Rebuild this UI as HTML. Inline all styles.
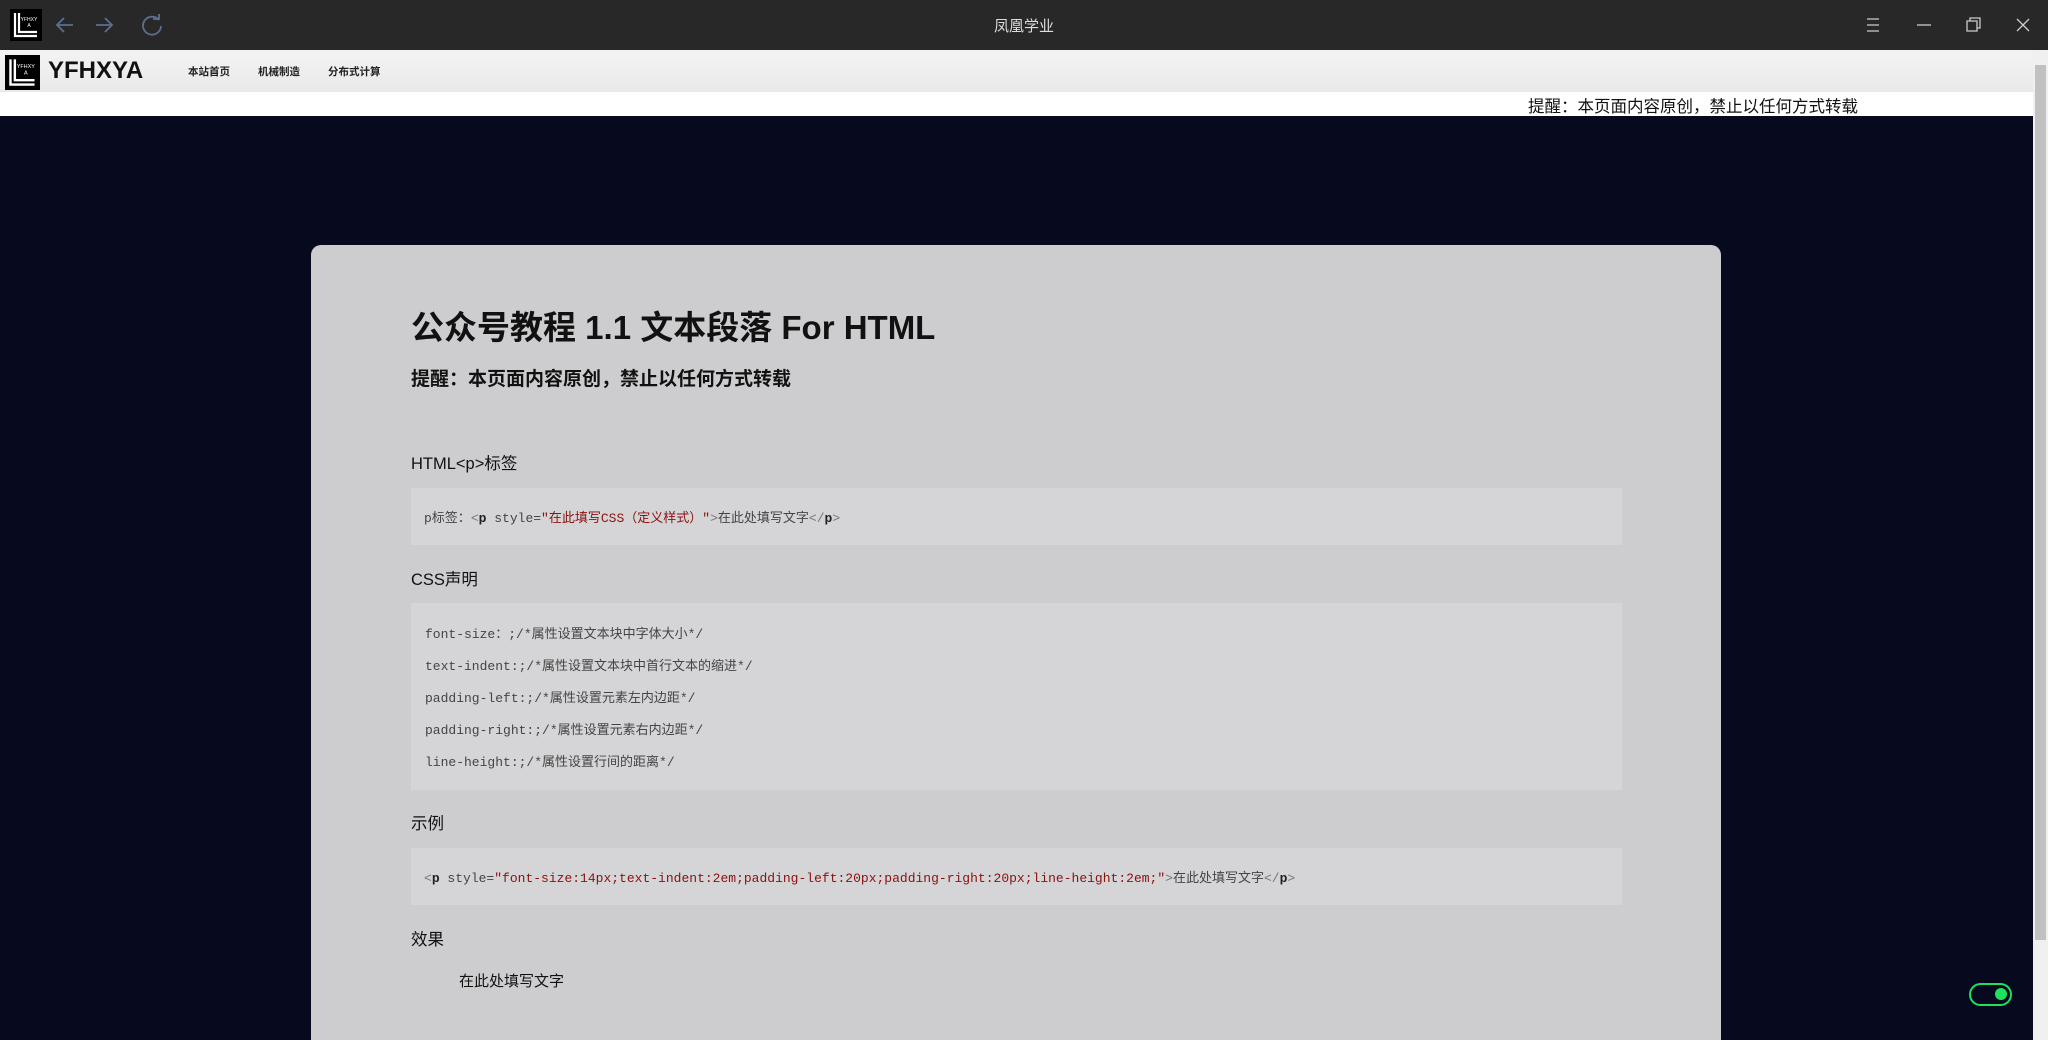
<!DOCTYPE html>
<html><head><meta charset="utf-8"><style>
*{margin:0;padding:0;box-sizing:border-box}
html,body{width:2048px;height:1040px;overflow:hidden}
body{background:#070a1f;font-family:"Liberation Sans","Noto Sans CJK SC",sans-serif;position:relative}
.a{position:absolute;white-space:nowrap}
.tb{left:0;top:0;width:2048px;height:50px;background:#282828}
.nav{left:0;top:50px;width:2033px;height:42px;background:linear-gradient(#f3f3f3,#e9e9e9)}
.strip{left:0;top:92px;width:2033px;height:24px;background:#fff}
.card{left:311px;top:245px;width:1410px;height:795px;background:#cdcdcf;border-radius:10px 10px 0 0}
.box{position:absolute;left:411px;width:1211px;background:#d5d5d7}
.mono{font-family:"Liberation Mono","Noto Sans CJK SC",monospace;font-size:13px;color:#444}
.h{font-size:17px;color:#111}
.r{color:#8b1010}
.k{color:#222;font-weight:bold}
.g{color:#777}
</style></head><body>
<div class="a tb"></div>
<svg class="a" style="left:10px;top:9px" width="32" height="32" viewBox="0 0 32 32"><rect width="32" height="32" fill="#000"/><path d="M5 4V27H27M9 4V23H27" stroke="#fff" stroke-width="2.2" fill="none"/><text x="19" y="12" font-size="5" fill="#fff" text-anchor="middle" font-family="Liberation Sans">YFHXY</text><text x="19" y="18" font-size="5" fill="#fff" text-anchor="middle" font-family="Liberation Sans">A</text></svg>
<svg class="a" style="left:54px;top:14px" width="110" height="22" viewBox="0 0 110 22"><g stroke="#5c6f8c" stroke-width="1.8" fill="none"><path d="M3 11H19M10 4L3 11L10 18"/><path d="M42 11H58M51 4L58 11L51 18"/><path d="M105 6A9 9 0 1 0 107 12"/><path d="M99 5H105V0" /></g></svg>
<div class="a" style="left:0;width:2048px;top:15px;text-align:center;color:#ddd;font-size:15px">凤凰学业</div>
<svg class="a" style="left:1860px;top:14px" width="180" height="22" viewBox="0 0 180 22"><g stroke="#ccc" stroke-width="1.3" fill="none"><path d="M7 5H19M7 11H19M7 17H19"/><path d="M57 11H71"/><path d="M107 7H117V17H107Z"/><path d="M110 7V4H120V14H117"/><path d="M157 5L169 17M169 5L157 17"/></g></svg>
<div class="a nav"></div>
<svg class="a" style="left:5px;top:55px" width="35" height="35" viewBox="0 0 32 32"><rect width="32" height="32" fill="#000"/><path d="M5 4V27H27M9 4V23H27" stroke="#fff" stroke-width="2.2" fill="none"/><text x="19" y="12" font-size="5" fill="#fff" text-anchor="middle" font-family="Liberation Sans">YFHXY</text><text x="19" y="18" font-size="5" fill="#fff" text-anchor="middle" font-family="Liberation Sans">A</text></svg>
<div class="a" style="left:48px;top:57px;font-size:24px;font-weight:bold;color:#111">YFHXYA</div>
<div class="a" style="left:188px;top:64px;font-size:10.5px;font-weight:bold;color:#222">本站首页</div>
<div class="a" style="left:258px;top:64px;font-size:10.5px;font-weight:bold;color:#222">机械制造</div>
<div class="a" style="left:328px;top:64px;font-size:10.5px;font-weight:bold;color:#222">分布式计算</div>
<div class="a strip"></div>
<div class="a" style="left:1528px;top:93px;font-size:16.5px;color:#111">提醒：本页面内容原创，禁止以任何方式转载</div>
<div class="a" style="left:2033px;top:50px;width:15px;height:990px;background:#f0f0f0"></div>
<div class="a" style="left:2035px;top:65px;width:11px;height:875px;background:#c1c1c1"></div>
<div class="a card"></div>
<div class="a" style="left:411px;top:301px;font-size:33px;font-weight:bold;color:#111">公众号教程 1.1 文本段落 For HTML</div>
<div class="a" style="left:411px;top:364px;font-size:19px;font-weight:bold;color:#111">提醒：本页面内容原创，禁止以任何方式转载</div>
<div class="a h" style="left:411px;top:450px;font-size:16.5px">HTML&lt;p&gt;标签</div>
<div class="box" style="top:488px;height:57px"></div>
<div class="a mono" style="left:424px;top:507px">p标签：<span class="g">&lt;</span><span class="k">p</span> style=<span class="r">"在此填写CSS（定义样式）"</span><span class="g">&gt;</span>在此处填写文字<span class="g">&lt;/</span><span class="k">p</span><span class="g">&gt;</span></div>
<div class="a h" style="left:411px;top:566px;font-size:16.5px">CSS声明</div>
<div class="box" style="top:603px;height:187px"></div>
<div class="a mono" style="left:425px;top:623px">font-size：;/*属性设置文本块中字体大小*/</div>
<div class="a mono" style="left:425px;top:655px">text-indent:;/*属性设置文本块中首行文本的缩进*/</div>
<div class="a mono" style="left:425px;top:687px">padding-left:;/*属性设置元素左内边距*/</div>
<div class="a mono" style="left:425px;top:719px">padding-right:;/*属性设置元素右内边距*/</div>
<div class="a mono" style="left:425px;top:751px">line-height:;/*属性设置行间的距离*/</div>
<div class="a h" style="left:411px;top:810px;font-size:16.5px">示例</div>
<div class="box" style="top:848px;height:57px"></div>
<div class="a mono" style="left:424px;top:867px"><span class="g">&lt;</span><span class="k">p</span> style=<span class="r">"font-size:14px;text-indent:2em;padding-left:20px;padding-right:20px;line-height:2em;"</span><span class="g">&gt;</span>在此处填写文字<span class="g">&lt;/</span><span class="k">p</span><span class="g">&gt;</span></div>
<div class="a h" style="left:411px;top:926px;font-size:16.5px">效果</div>
<div class="a" style="left:459px;top:970px;font-size:15px;color:#111">在此处填写文字</div>
<div class="a" style="left:1969px;top:983px;width:43px;height:23px;border:2.5px solid #1fe05a;border-radius:12px"></div>
<div class="a" style="left:1995px;top:988px;width:12px;height:12px;border-radius:50%;background:#1fe05a"></div>
</body></html>
